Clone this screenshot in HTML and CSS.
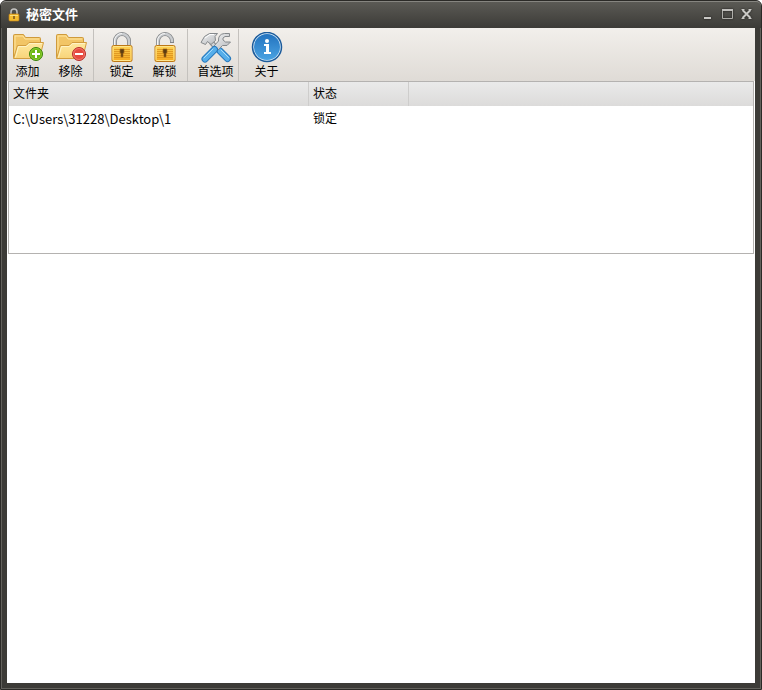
FILE: index.html
```
<!DOCTYPE html>
<html lang="zh-CN">
<head>
    <meta charset="UTF-8">
    <meta name="viewport" content="width=device-width, initial-scale=1.0">
    <title>秘密文件</title>
    <link rel="stylesheet" href="styles.css">
</head>
<body>

<!-- Shared gradients and shapes -->
<svg class="defs" width="0" height="0" aria-hidden="true">
    <defs>
        <linearGradient id="gold" x1="0" y1="0" x2="0" y2="1">
            <stop offset="0" stop-color="#ffd65a"/>
            <stop offset="1" stop-color="#f4a51c"/>
        </linearGradient>
        <linearGradient id="paper" x1="0" y1="0" x2="0" y2="1">
            <stop offset="0" stop-color="#ffe9a0"/>
            <stop offset="1" stop-color="#f8d47a"/>
        </linearGradient>
        <linearGradient id="steel" x1="0" y1="0" x2="1" y2="1">
            <stop offset="0" stop-color="#f2f3f4"/>
            <stop offset="1" stop-color="#b4b7ba"/>
        </linearGradient>
        <linearGradient id="blue" x1="0" y1="0" x2="0" y2="1">
            <stop offset="0" stop-color="#2373bf"/>
            <stop offset="1" stop-color="#4ba3e2"/>
        </linearGradient>
        <g id="folder">
            <path d="M1.500 25.500V3.500q0-1 1-1h9l2 3h14q1 0 1 1v18z" fill="#f2c566" stroke="#cf9a3c"/>
            <path d="M3 22V4h8l2 3h14" fill="none" stroke="#ffe6a0"/>
            <path d="M1.500 26.500 5.500 13.500h8.500l3-3h14.500l-4 16z" fill="url(#paper)" stroke="#d39d3e"/>
            <path d="M3.500 25.500 6.500 14.500h8l3-3h12.500" fill="none" stroke="#fff3c5"/>
        </g>
        <g id="lockBody">
            <rect x="6" y="13.500" width="20" height="16" rx="1.500" fill="url(#gold)" stroke="#bd7815"/>
            <rect x="7" y="14.500" width="18" height="14" rx="1" fill="none" stroke="#ffe58b"/>
            <path d="M8 17.500h16M8 19.500h16M8 21.500h16M8 23.500h16M8 25.500h16" stroke="#d98e1c" opacity=".75"/>
            <path d="M14 17h4v4h-1v4h-2v-4h-1z" fill="#5c3c12" stroke="#a86c18" stroke-width=".7"/>
        </g>
    </defs>
</svg>

<div class="window">
    <header class="titlebar">
        <svg class="app-icon" width="12" height="14" viewBox="0 0 12 14" aria-hidden="true">
            <path d="M3 7V4q0-3 3-3t3 3v3" fill="none" stroke="#c3c3c0" stroke-width="1.500"/>
            <rect x="1" y="6" width="10" height="7" rx="1" fill="#f5bd30" stroke="#c08217" stroke-width=".7"/>
            <path d="M2 7.500h8" stroke="#ffe178"/>
            <path d="M6 8v3" stroke="#76501a" stroke-width="1.500"/>
        </svg>
        <h1>秘密文件</h1>
        <div class="window-buttons">
            <button type="button" aria-label="最小化">
                <svg width="13" height="13" viewBox="0 0 13 13"><path d="M2 10h7" stroke="#c9c8c5" stroke-width="2"/></svg>
            </button>
            <button type="button" aria-label="最大化">
                <svg width="13" height="13" viewBox="0 0 13 13"><path d="M1.500 2v8.500h10V2" fill="none" stroke="#aeada9"/><path d="M1 2h11" stroke="#c0bfbc" stroke-width="2"/></svg>
            </button>
            <button type="button" aria-label="关闭">
                <svg width="13" height="13" viewBox="0 0 13 13"><path d="M2.500 2l8 8M10.500 2l-8 8" stroke="#c9c8c5" stroke-width="2"/><path d="M1.500 1.500h3M8.500 1.500h3M1.500 10.500h3M8.500 10.500h3" stroke="#c9c8c5"/></svg>
            </button>
        </div>
    </header>

    <main class="content">
        <nav class="toolbar">
            <button type="button" class="tool">
                <svg width="32" height="32" viewBox="0 0 32 32">
                    <use href="#folder"/>
                    <circle cx="24" cy="22" r="6.500" fill="#6db812" stroke="#39800b"/>
                    <circle cx="24" cy="22" r="5.500" fill="none" stroke="#9bd645" stroke-width=".7"/>
                    <path d="M24 18v8M20 22h8" stroke="#fff" stroke-width="2"/>
                </svg>
                <span>添加</span>
            </button>
            <button type="button" class="tool">
                <svg width="32" height="32" viewBox="0 0 32 32">
                    <use href="#folder"/>
                    <circle cx="24" cy="22" r="6.500" fill="#e6493f" stroke="#b6302b"/>
                    <circle cx="24" cy="22" r="5.500" fill="none" stroke="#f58c80" stroke-width=".7"/>
                    <path d="M20 22h8" stroke="#fff" stroke-width="2"/>
                </svg>
                <span>移除</span>
            </button>
            <div class="separator"></div>
            <button type="button" class="tool">
                <svg width="32" height="32" viewBox="0 0 32 32">
                    <path d="M9 13V9a7 7 0 0 1 14 0v4" fill="none" stroke="#808386" stroke-width="4"/>
                    <path d="M9 13V9a7 7 0 0 1 14 0v4" fill="none" stroke="#c9cccf" stroke-width="2.500"/>
                    <path d="M8.500 13V9A7.500 7.500 0 0 1 16 1.500" fill="none" stroke="#f5f5f5"/>
                    <use href="#lockBody"/>
                </svg>
                <span>锁定</span>
            </button>
            <button type="button" class="tool">
                <svg width="32" height="32" viewBox="0 0 32 32">
                    <path d="M9 13V9a7 7 0 0 1 14 0v2" fill="none" stroke="#808386" stroke-width="4"/>
                    <path d="M9 13V9a7 7 0 0 1 14 0v1" fill="none" stroke="#c9cccf" stroke-width="2.500"/>
                    <path d="M8.500 13V9A7.500 7.500 0 0 1 16 1.500" fill="none" stroke="#f5f5f5"/>
                    <use href="#lockBody"/>
                </svg>
                <span>解锁</span>
            </button>
            <div class="separator"></div>
            <button type="button" class="tool">
                <svg width="32" height="32" viewBox="0 0 32 32">
                    <!-- hammer -->
                    <path d="M11 10l8 9" stroke="#85898c" stroke-width="5"/>
                    <path d="M11 10l8 9" stroke="#d2d5d7" stroke-width="3"/>
                    <path d="M1 10.500 4.500 4.500l5-3h8l-2.500 3 .5 4-4.500 4-3.500-3-2 3z" fill="url(#steel)" stroke="#85898c"/>
                    <path d="M5 6l5-3.500h4" fill="none" stroke="#fff"/>
                    <path d="M20 19l7.500 7.500" stroke="#2879bd" stroke-width="7" stroke-linecap="round"/>
                    <path d="M20 19l7.500 7.500" stroke="#56aeea" stroke-width="5" stroke-linecap="round"/>
                    <path d="M21 18l7.500 7.500" stroke="#a9dcfa" stroke-linecap="round"/>
                    <!-- wrench -->
                    <path d="M29.500 1.500h-5Q18 2 18.500 9L14 14l4 4 4.500-4.500H27l3.500-3.500h-5L23 8V6l2-1.500h4.500z" fill="url(#steel)" stroke="#85898c"/>
                    <path d="M14.500 17.500 5 27" stroke="#2879bd" stroke-width="7" stroke-linecap="round"/>
                    <path d="M14.500 17.500 5 27" stroke="#56aeea" stroke-width="5" stroke-linecap="round"/>
                    <path d="M13 17 4 26" stroke="#a9dcfa" stroke-linecap="round"/>
                </svg>
                <span>首选项</span>
            </button>
            <div class="separator"></div>
            <button type="button" class="tool">
                <svg width="32" height="32" viewBox="0 0 32 32">
                    <circle cx="16" cy="15" r="14.500" fill="#d9edfb" stroke="#1c5b9b" stroke-width="1.500"/>
                    <circle cx="16" cy="15" r="13" fill="url(#blue)"/>
                    <circle cx="16" cy="9" r="2" fill="#fff"/>
                    <path d="M13 12h5v8h2v2h-7v-2h2v-6h-2z" fill="#fff"/>
                </svg>
                <span>关于</span>
            </button>
        </nav>

        <div class="list">
            <table>
                <thead>
                    <tr>
                        <th class="col-folder">文件夹</th>
                        <th class="col-state">状态</th>
                        <td></td>
                    </tr>
                </thead>
                <tbody>
                    <tr>
                        <td class="path">C:\Users\31228\Desktop\1</td>
                        <td>锁定</td>
                        <td></td>
                    </tr>
                </tbody>
            </table>
        </div>
    </main>
</div>

</body>
</html>
```
FILE: styles.css
```
* {
    box-sizing: border-box;
}

body {
    margin: 0;
    background: #fff;
    color: #000;
    font-family: "Open Sans", "Noto Sans CJK SC", sans-serif;
    font-size: 12px;
    line-height: 16px;
}

.defs {
    position: absolute;
}

.window {
    display: flex;
    flex-direction: column;
    min-height: 100vh;
    padding: 0 6px 6px;
    border: 1px solid #2b2a27;
    border-radius: 6px 6px 0 0;
    background: #3c3b37;
    box-shadow: inset 0 0 0 1px #62615c;
}

.titlebar {
    display: flex;
    align-items: center;
    height: 27px;
    margin: 0 -6px;
    padding: 0 8px 0 7px;
    border-top: 1px solid #868580;
    border-radius: 5px 5px 0 0;
    background: linear-gradient(#5b5a55, #3c3b37);
}

.titlebar h1 {
    flex: 1;
    margin: 0 0 0 6px;
    padding-bottom: 2px;
    color: #fff;
    font-size: 13px;
    line-height: 16px;
    font-weight: bold;
}

.window-buttons {
    display: flex;
    gap: 6px;
    padding-bottom: 2px;
}

.window-buttons button {
    display: flex;
    padding: 0;
    border: 0;
    background: none;
    filter: drop-shadow(0 0 1px #1d1c1a);
}

.content {
    flex: 1;
    background: #fff;
}

.toolbar {
    display: flex;
    height: 53px;
    padding-top: 1px;
    background: linear-gradient(#f2efeb, #dfdbd6);
}

.tool {
    display: flex;
    flex-direction: column;
    align-items: center;
    width: 43px;
    padding: 3px 2px 0 0;
    border: 0;
    background: none;
    color: #000;
    font: inherit;
    white-space: nowrap;
}

.tool svg {
    flex: none;
}

.separator {
    width: 1px;
    margin-right: 7px;
    background: #c4c1bd;
}

.list {
    height: 173px;
    margin: 0 1px;
    border: 1px solid #b4b2b0;
    background: #fff;
}

.list table {
    width: 100%;
    table-layout: fixed;
    border-collapse: separate;
    border-spacing: 0;
}

.list th,
.list td {
    height: 24px;
    padding: 0 4px;
    text-align: left;
    font-weight: normal;
}

.list tbody td {
    height: 26px;
}

.list .path {
    font-family: "Noto Sans CJK SC", sans-serif;
    font-size: 13px;
}

.list thead tr {
    background: linear-gradient(#eaeaea, #dcdbda);
}

.list th {
    border-right: 1px solid #cecdcc;
}

.col-folder {
    width: 300px;
}

.col-state {
    width: 100px;
}
```
